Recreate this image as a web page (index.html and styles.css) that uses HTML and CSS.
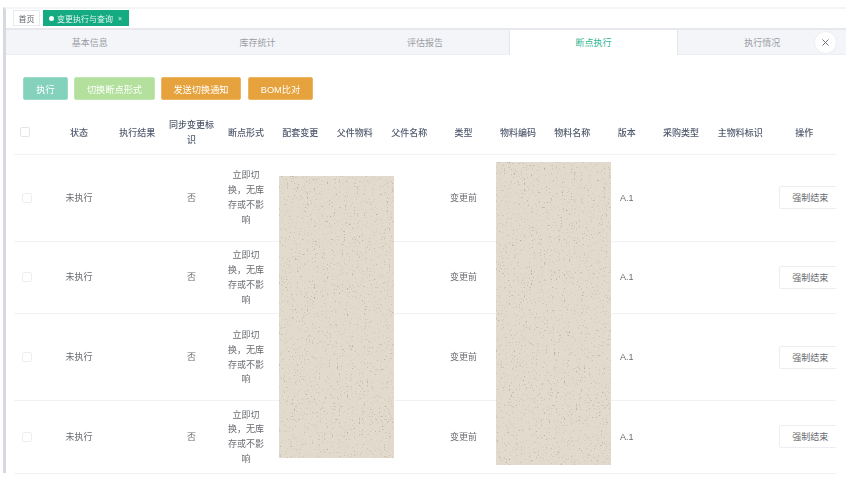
FILE: index.html
```html
<!DOCTYPE html>
<html>
<head>
  <title>变更执行与查询</title>
  <link rel="stylesheet" href="styles.css">
</head>
<body>
  <svg class="defs" width="0" height="0">
    <filter id="speckle" x="0" y="0" width="100%" height="100%">
      <feTurbulence type="fractalNoise" baseFrequency="0.6" numOctaves="3" seed="7"/>
      <feColorMatrix type="matrix" values="0 0 0 0 0.45  0 0 0 0 0.40  0 0 0 0 0.32  2.6 2.6 0 0 -3.05"/>
    </filter>
  </svg>

  <div class="page">
    <div class="tag-bar">
      <span class="tag">首页</span>
      <span class="tag tag-active"><i class="dot"></i>变更执行与查询<b class="tag-close">×</b></span>
    </div>

    <div class="tabs">
      <div class="tab">基本信息</div>
      <div class="tab">库存统计</div>
      <div class="tab">评估报告</div>
      <div class="tab active">断点执行</div>
      <div class="tab">执行情况</div>
      <button class="tab-close">
        <svg width="9" height="9" viewBox="0 0 9 9"><path d="M1.5 1.5l6 6M7.5 1.5l-6 6" stroke="#6b7280" stroke-width="1" fill="none"/></svg>
      </button>
    </div>

    <div class="actions">
      <button class="btn btn-teal">执行</button>
      <button class="btn btn-green">切换断点形式</button>
      <button class="btn btn-orange">发送切换通知</button>
      <button class="btn btn-orange btn-bom">BOM比对</button>
    </div>

    <div class="table-wrap">
      <table class="grid">
        <colgroup>
          <col class="col-check">
          <col class="col-status">
          <col span="10" class="col-std">
          <col class="col-std">
          <col class="col-wide">
          <col class="col-wide">
        </colgroup>
        <thead>
          <tr>
            <th class="check-cell"><span class="check check-head"></span></th>
            <th>状态</th>
            <th>执行结果</th>
            <th>同步变更标识</th>
            <th>断点形式</th>
            <th>配套变更</th>
            <th>父件物料</th>
            <th>父件名称</th>
            <th>类型</th>
            <th>物料编码</th>
            <th>物料名称</th>
            <th>版本</th>
            <th>采购类型</th>
            <th>主物料标识</th>
            <th>操作</th>
          </tr>
        </thead>
        <tbody>
          <tr class="row-tall">
            <td class="check-cell"><span class="check"></span></td>
            <td>未执行</td><td></td><td>否</td>
            <td class="wrap">立即切换，无库存或不影响</td>
            <td></td><td></td><td></td><td>变更前</td><td></td><td></td><td>A.1</td><td></td><td></td>
            <td class="op"><button class="btn-plain">强制结束</button></td>
          </tr>
          <tr class="row-short">
            <td class="check-cell"><span class="check"></span></td>
            <td>未执行</td><td></td><td>否</td>
            <td class="wrap">立即切换，无库存或不影响</td>
            <td></td><td></td><td></td><td>变更前</td><td></td><td></td><td>A.1</td><td></td><td></td>
            <td class="op"><button class="btn-plain">强制结束</button></td>
          </tr>
          <tr class="row-tall">
            <td class="check-cell"><span class="check"></span></td>
            <td>未执行</td><td></td><td>否</td>
            <td class="wrap">立即切换，无库存或不影响</td>
            <td></td><td></td><td></td><td>变更前</td><td></td><td></td><td>A.1</td><td></td><td></td>
            <td class="op"><button class="btn-plain">强制结束</button></td>
          </tr>
          <tr class="row-short">
            <td class="check-cell"><span class="check"></span></td>
            <td>未执行</td><td></td><td>否</td>
            <td class="wrap">立即切换，无库存或不影响</td>
            <td></td><td></td><td></td><td>变更前</td><td></td><td></td><td>A.1</td><td></td><td></td>
            <td class="op"><button class="btn-plain">强制结束</button></td>
          </tr>
        </tbody>
      </table>

      <!-- paper patches covering the hidden columns -->
      <svg class="patch patch-left" width="115" height="282"><rect width="115" height="282" filter="url(#speckle)"/></svg>
      <svg class="patch patch-right" width="115" height="303"><rect width="115" height="303" filter="url(#speckle)"/></svg>
    </div>
  </div>
</body>
</html>
```

FILE: styles.css
```css
* {
  box-sizing: border-box;
}

body {
  margin: 0;
  height: 481px;
  overflow: hidden;
  background: #fff;
  font-family: "Liberation Sans", "Noto Sans CJK SC", sans-serif;
  font-size: 9px;
  color: #6a6c70;
}

.defs {
  position: absolute;
}

.page {
  width: 843px;
  height: 466px;
  margin: 7px 0 0 3px;
  border-left: 3px solid #d6d9df;
  border-top: 2px solid #f4f5f7;
  filter: blur(0.35px);
}

.tag-bar {
  display: flex;
  gap: 3px;
  height: 19px;
  padding: 1px 0 0 7px;
}

.tag {
  display: flex;
  align-items: center;
  justify-content: center;
  width: 27px;
  height: 16px;
  background: #fff;
  border: 1px solid #e8eaee;
  font-size: 8px;
  color: #5f6368;
}

.tag-active {
  justify-content: flex-start;
  width: 86px;
  padding-left: 5px;
  background: #14ab82;
  border-color: #14ab82;
  color: #e4f6f0;
}

.dot {
  width: 5px;
  height: 5px;
  margin-right: 3px;
  border-radius: 50%;
  background: #fff;
}

.tag-close {
  margin-left: 5px;
  font-weight: normal;
  font-size: 7px;
}

.tabs {
  position: relative;
  display: flex;
  height: 27px;
  background: #f4f5f9;
  border-top: 2px solid #e6e8ee;
}

.tab {
  flex: 1;
  display: flex;
  align-items: center;
  justify-content: center;
  color: #9a9da3;
  border-bottom: 1px solid #eceef3;
}

.tab.active {
  background: #fff;
  color: #2fb592;
  border-left: 1px solid #e4e6eb;
  border-right: 1px solid #e4e6eb;
  border-bottom: none;
}

.tab-close {
  position: absolute;
  right: 9px;
  top: 1px;
  width: 23px;
  height: 23px;
  padding: 0;
  display: flex;
  align-items: center;
  justify-content: center;
  background: #fff;
  border: 1px solid #eceef2;
  border-radius: 50%;
}

.actions {
  display: flex;
  gap: 6px;
  padding: 22px 0 0 17px;
}

.btn {
  height: 23px;
  padding: 0;
  border-radius: 2px;
  font: 9.2px "Liberation Sans", "Noto Sans CJK SC", sans-serif;
  color: #fff;
}

.btn-teal {
  width: 45px;
  background: #85d2bc;
  border: 1px solid #9adac8;
}

.btn-green {
  width: 81px;
  background: #b3e19d;
  border: 1px solid #c2e7b0;
}

.btn-orange {
  width: 80px;
  background: #e6a23c;
  border: 1px solid #ebb563;
}

.btn-bom {
  width: 65px;
  margin-left: 1px;
}

.table-wrap {
  position: relative;
  width: 822px;
  margin: 10px 0 0 8px;
  overflow: hidden;
}

.grid {
  width: 822px;
  table-layout: fixed;
  border-collapse: collapse;
}

.col-check { width: 34px; }
.col-status { width: 62px; }
.col-std { width: 54.4px; }
.col-wide { width: 64px; }

.grid th {
  height: 44px;
  padding: 3px 4px 0;
  font-weight: 500;
  line-height: 15px;
  color: #515a6e;
  border-bottom: 1px solid #f0f2f5;
}

.grid td {
  padding: 1px 7px 0;
  text-align: center;
  line-height: 14.8px;
  border-bottom: 1px solid #f0f2f5;
}

.grid td.wrap {
  padding: 1px 5px 0;
}

.row-tall { height: 87px; }
.row-short { height: 72.5px; }

.grid .check-cell {
  padding: 0 0 0 8px;
  text-align: left;
}

.check {
  display: block;
  width: 10px;
  height: 10px;
  border: 1px solid #eceef1;
  border-radius: 2px;
}

.check-head {
  margin-left: -2px;
  border-color: #e2e4e8;
}

.grid td.op {
  padding: 0 0 0 7px;
  overflow: hidden;
  text-align: left;
}

.btn-plain {
  width: 62px;
  height: 23px;
  padding: 0;
  background: #fff;
  border: 1px solid #eceef1;
  border-radius: 2px;
  font: 9px "Liberation Sans", "Noto Sans CJK SC", sans-serif;
  color: #6a6c70;
}

.patch {
  position: absolute;
  background: #e2dacc;
}

.patch-left {
  left: 265px;
  top: 66px;
}

.patch-right {
  left: 482px;
  top: 52px;
}
```
